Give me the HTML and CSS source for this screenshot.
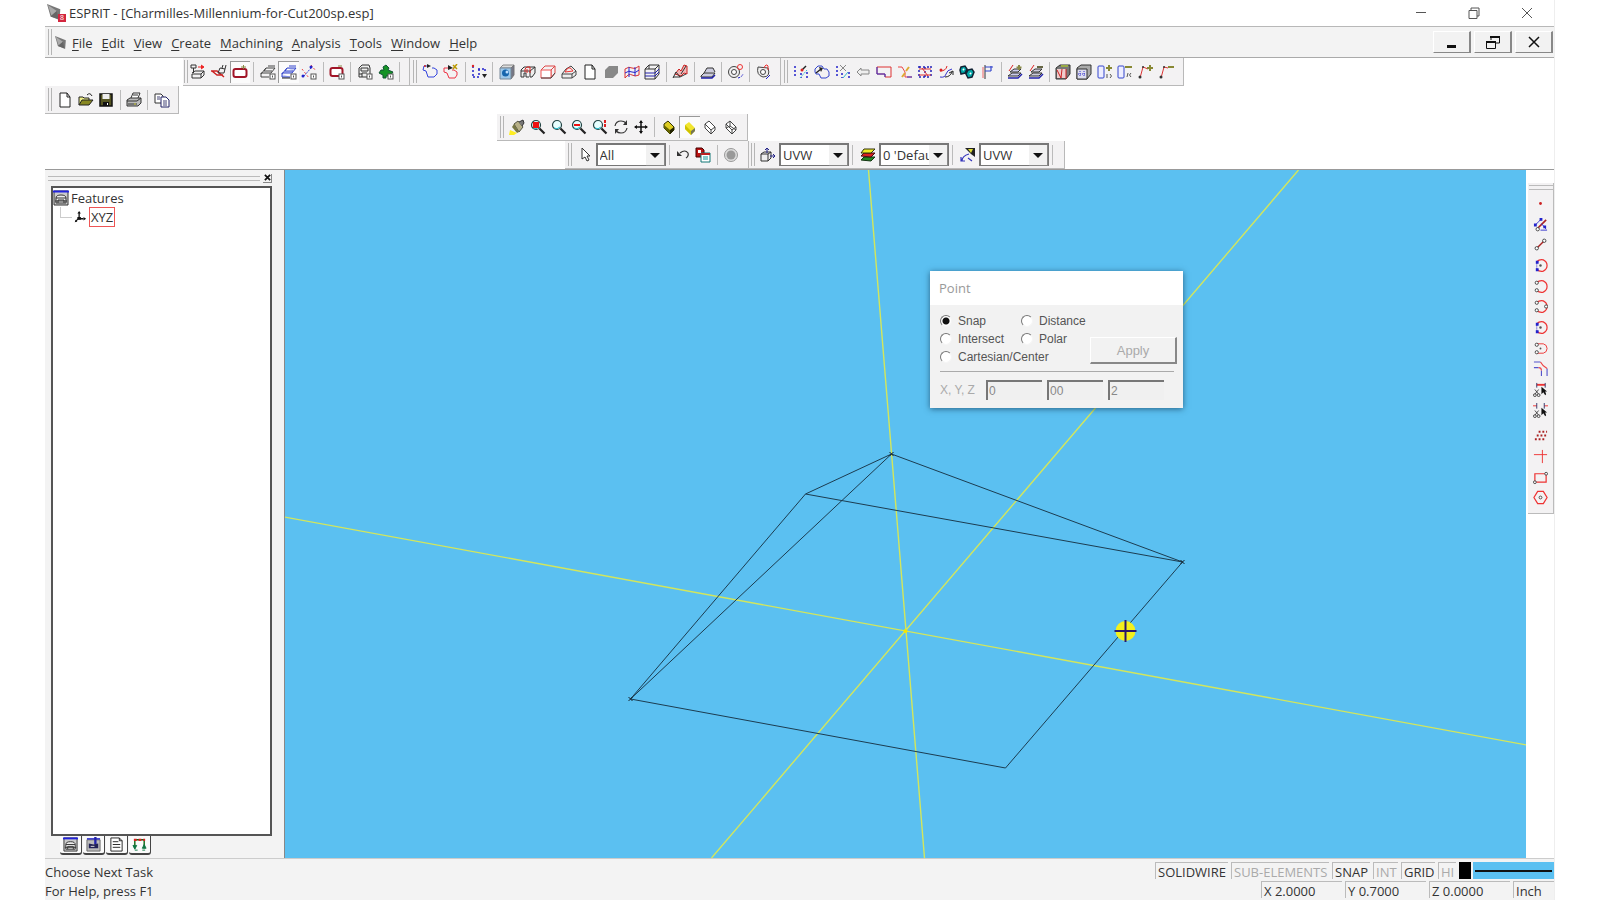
FILE: index.html
```html
<!DOCTYPE html>
<html lang="en">
<head>
<meta charset="utf-8">
<title>ESPRIT</title>
<link rel="stylesheet" href="styles.css">
</head>
<body>
<svg class="sprite" aria-hidden="true">
  <symbol id="logo" viewBox="0 0 18 18"><path d="M0 0L15 6L14 18L4 14Z" fill="#777"/><path d="M1 1L11 8L5 13Z" fill="#aaa"/><path d="M4 14L11 8L13 17Z" fill="#666"/></symbol>
  <symbol id="gear" viewBox="0 0 16 16"><rect x="10" y="10" width="5" height="5" fill="#fff" stroke="#555"/><path d="M12.500 11.500v2" stroke="#555"/></symbol>
  <symbol id="m1" viewBox="0 0 16 16"><g fill="none" stroke="#333"><path d="M1 1h5v3h-5zM3.500 4v5M2 9l3-2h9l-3 3h-9v4h9l3-3v-4M11 10v4"/></g><path d="M8 3h5M11 1l3 2l-3 2" stroke="#e22" fill="#e22"/></symbol>
  <symbol id="m2" viewBox="0 0 16 16"><path d="M0 7h6l7 6M1 7l5 4h6" stroke="#c22" stroke-width="1.500" fill="none"/><path d="M7 9l2-5l5 1l-1 4zM11 4l1-3M14 5l1-4" fill="none" stroke="#333"/></symbol>
  <symbol id="m3" viewBox="0 0 16 16"><rect x="1.500" y="5" width="13" height="8" rx="2" fill="#fff" stroke="#a11527" stroke-width="2"/><path d="M9 3h5M11.500 1v4" stroke="#884"/></symbol>
  <symbol id="m4" viewBox="0 0 16 16"><path d="M1 10l5-6h9l-4 5h-10v4h8M6 4l-2 3h8M8 2h7" fill="none" stroke="#444"/><use href="#gear"/></symbol>
  <symbol id="m5" viewBox="0 0 16 16"><path d="M1 10l5-6h9l-4 5h-10v4h8M6 4l-2 3h8M8 2h7" fill="#c9cff5" stroke="#34c"/><path d="M1 14h8" stroke="#222"/><use href="#gear"/></symbol>
  <symbol id="m6" viewBox="0 0 16 16"><path d="M3 12L10 4" stroke="#34c" stroke-dasharray="2 1"/><path d="M1 5l7 9M10 1l5 6" stroke="#e44" stroke-dasharray="2 2"/><circle cx="10" cy="3" r="1.500" fill="#22c"/><circle cx="2" cy="12" r="1.500" fill="#22c"/><use href="#gear"/></symbol>
  <symbol id="m7" viewBox="0 0 16 16"><rect x="1.500" y="4" width="12" height="8" rx="2" fill="#fff" stroke="#a11527" stroke-width="2"/><path d="M9 2h4" stroke="#884"/><use href="#gear"/></symbol>
  <symbol id="m8" viewBox="0 0 16 16"><path d="M2 13v-9l3-3h7l1 3v9zM4 4h7v3h-7zM2 10h3" fill="#eee" stroke="#333"/><path d="M5 13v-4h5" stroke="#333" fill="none"/><use href="#gear"/></symbol>
  <symbol id="m9" viewBox="0 0 16 16"><path d="M8 1l3 3l-1 2l5 2l-3 4h-4v2h-3v-3l-4-2l2-3h3l-1-3z" fill="#159326" stroke="#153"/><use href="#gear"/></symbol>
  <symbol id="c1" viewBox="0 0 16 16"><path d="M5 2h-3l-1 4l3 1l2 6h6l3-3v-4l-3-2h-2" fill="none" stroke="#34d"/><path d="M5 0l4 2l-4 2z" fill="#222"/><circle cx="3" cy="2" r="1" fill="#c22"/></symbol>
  <symbol id="c2" viewBox="0 0 16 16"><path d="M5 4h-4v4l3 1l2 5h6l2-3v-3l-3-2h-2" fill="none" stroke="#e34"/><path d="M5 1l5 3l-5 2z" fill="#222"/><path d="M10 1l4 4M14 0l-4 5" stroke="#b90" stroke-width="1.500"/></symbol>
  <symbol id="c3" viewBox="0 0 16 16"><path d="M2 2v12M2 13h8M7 5h7M8 5v8M14 5v3" fill="none" stroke="#22c" stroke-width="1.500" stroke-dasharray="2 2"/><path d="M11 10h5l-2.500 4z" fill="#222"/><circle cx="2" cy="2" r="1.200" fill="#d22"/></symbol>
  <symbol id="s1" viewBox="0 0 16 16"><path d="M1 4l3-3h11l-3 3z" fill="#ddd" stroke="#888"/><path d="M12 4l3-3v10l-3 4z" fill="#778" stroke="#777"/><path d="M1 4h11v11h-11z" fill="#9cc8ea" stroke="#789"/><circle cx="6.500" cy="9" r="3.500" fill="#1565ad"/><circle cx="8" cy="8" r="1.500" fill="#bdf"/></symbol>
  <symbol id="s2" viewBox="0 0 16 16"><path d="M1 6l3-3h11v6l-3 4h-2v-6h-9M1 6v7h3v-4h2v4h3M10 7l5-4" fill="#eee" stroke="#333"/><path d="M5 8v-3l2-2h3v6M7 9v-4" fill="none" stroke="#d22"/></symbol>
  <symbol id="s3" viewBox="0 0 16 16"><path d="M1 6l4-4h10l-4 4v8M15 2v7l-4 5" fill="none" stroke="#d44"/><path d="M1 6h10v8h-10z" fill="#fff" stroke="#e55"/><path d="M1 14h10l4-5" fill="none" stroke="#444"/></symbol>
  <symbol id="s4" viewBox="0 0 16 16"><path d="M1 10l4-5l5-3l5 5v4l-4 3h-10zM1 10h10l4-3M11 10v4" fill="#eee" stroke="#444"/><path d="M4 8q4-8 8-1z" fill="none" stroke="#e33"/></symbol>
  <symbol id="doc" viewBox="0 0 16 16"><path d="M3 1h7l3 4v10h-10zM10 1v4h3" fill="#fff" stroke="#222"/></symbol>
  <symbol id="s6" viewBox="0 0 16 16"><path d="M2 6l4-4h9v7l-5 5h-8z" fill="#888"/></symbol>
  <symbol id="s7" viewBox="0 0 16 16"><path d="M1 5q4-3 7-1t7-2v9q-4 2-7 0t-7 3z" fill="none" stroke="#d33"/><path d="M5 3v10M11 3v9M1 9q4-3 7-1t7-2" fill="none" stroke="#22c"/></symbol>
  <symbol id="s8" viewBox="0 0 16 16"><path d="M1 5l4-4h10v9l-4 5h-10zM1 5h10v10M11 5l4-4M5 1v4" fill="none" stroke="#333"/><path d="M1 9h10l4-4M1 12h10l4-4" stroke="#22a" fill="none"/></symbol>
  <symbol id="s9" viewBox="0 0 16 16"><path d="M3 10l4-5l2 2l3-6l3 1v8l-3-1l-3 3z" fill="#f2b7b7" stroke="#c22"/><path d="M1 14l3-6l4 5h-7M9 10l5-8M8 13l6-3" stroke="#333" fill="none"/></symbol>
  <symbol id="s10" viewBox="0 0 16 16"><path d="M1 12l3-3h11l-3 4h-11zM4 9l3-5h6l2 4" fill="#ccd" stroke="#333"/><path d="M1 14h11l3-3" fill="none" stroke="#22a" stroke-width="1.500"/></symbol>
  <symbol id="s11" viewBox="0 0 16 16"><circle cx="6" cy="8" r="5.500" fill="#eee" stroke="#444"/><circle cx="6" cy="8" r="2.500" fill="#fff" stroke="#444"/><circle cx="12" cy="3" r="2.500" fill="none" stroke="#e33"/><path d="M10 14q4-1 5-4" fill="none" stroke="#22c" stroke-dasharray="2 1"/></symbol>
  <symbol id="s12" viewBox="0 0 16 16"><path d="M2 3l10 1q3 9-5 9q-7-2-5-10z" fill="#eee" stroke="#444"/><circle cx="7" cy="8" r="2.500" fill="#fff" stroke="#444"/><path d="M8 4q2-5 4-2v4" fill="none" stroke="#e33"/><path d="M10 15l4-4" stroke="#22c"/></symbol>
  <symbol id="f1" viewBox="0 0 16 16"><path d="M2 2v12M14 8v6M8 9v5" stroke="#22c" stroke-width="1.500" stroke-dasharray="2 2"/><path d="M9 6l4-4" stroke="#222" stroke-width="1.500"/><path d="M7 14l7-8" stroke="#3bc" stroke-dasharray="2 1"/><circle cx="9" cy="6" r="1.500" fill="#d22"/></symbol>
  <symbol id="f2" viewBox="0 0 16 16"><path d="M1 5l3-3h4l2 3h3l2 3v4l-3 2h-5l-2-4h-3l-1-2z" fill="none" stroke="#34c"/><path d="M2 9l5-4" stroke="#222" stroke-width="1.500"/><path d="M5 3l4 1l-2 4z" fill="#222"/></symbol>
  <symbol id="f3" viewBox="0 0 16 16"><path d="M2 2v12M14 8v6M7 9v5" stroke="#22c" stroke-width="1.500" stroke-dasharray="2 2"/><path d="M5 1l6 6M11 1l-6 6" stroke="#888"/><path d="M8 14l5-6" stroke="#3bc"/></symbol>
  <symbol id="f4" viewBox="0 0 16 16"><path d="M2 8l4-4v2h8v4h-8v2z" fill="#eee" stroke="#888"/></symbol>
  <symbol id="f5" viewBox="0 0 16 16"><path d="M1 3h14v10h-6v-3h-8z" fill="none" stroke="#d33"/><path d="M1 3v7h8v3" fill="none" stroke="#33c"/></symbol>
  <symbol id="f6" viewBox="0 0 16 16"><path d="M1 3h4l3 5v5h7" fill="none" stroke="#e44"/><path d="M9 7l3-4M5 13l3-4" stroke="#da3" stroke-width="2"/><path d="M10 13h5" stroke="#33c"/></symbol>
  <symbol id="f7" viewBox="0 0 16 16"><path d="M2 2v12M14 2v12M2 3h12M2 13h12M8 3v10" fill="none" stroke="#22b" stroke-width="1.500" stroke-dasharray="2 2"/><path d="M2 5h12M2 11h12M5 4l6 8" stroke="#d33"/></symbol>
  <symbol id="f8" viewBox="0 0 16 16"><path d="M2 7q6 0 7-5" stroke="#d22" fill="none"/><circle cx="3" cy="6" r="1.500" fill="#d22"/><path d="M2 13q5 1 6-3t6-5" fill="none" stroke="#33c"/><path d="M7 13q5 0 7-5M11 9l4-2v4" fill="none" stroke="#222"/></symbol>
  <symbol id="f9" viewBox="0 0 16 16"><path d="M2 3l4-1l2 3l-2 4l-4 1l-1-4zM9 6l4-1l2 3l-2 5l-4 1l-2-4z" fill="#0aa" stroke="#123" stroke-width="1.500"/><path d="M4 5l1 1M11 9l1 1" stroke="#fff" stroke-width="2"/></symbol>
  <symbol id="f10" viewBox="0 0 16 16"><path d="M6 1v14" stroke="#333"/><path d="M6 7h6M12 2v5M6 3h8" stroke="#34c" stroke-width="1.200"/><path d="M4 3v11" stroke="#e66"/></symbol>
  <symbol id="f11" viewBox="0 0 16 16"><path d="M1 12l4-3h9l-3 3zM3 8l4-3h7l-3 3z" fill="#cce" stroke="#333"/><path d="M1 14h10l4-4" stroke="#22a" fill="none" stroke-width="1.500"/><path d="M2 7l4-6" stroke="#d22"/><path d="M12 1v5M9.500 3.500h5" stroke="#884" stroke-width="2"/></symbol>
  <symbol id="f12" viewBox="0 0 16 16"><path d="M1 12l4-3h9l-3 3zM3 8l4-3h7l-3 3z" fill="#ccd" stroke="#333"/><path d="M1 14h10l4-4" stroke="#22a" fill="none" stroke-width="1.500"/><path d="M2 7l4-6" stroke="#d22"/><path d="M9 3h6" stroke="#664" stroke-width="2"/></symbol>
  <symbol id="f13" viewBox="0 0 16 16"><path d="M1 4l4-3h10v9l-4 5h-10z" fill="#777" stroke="#333"/><path d="M2 5h9v9h-9z" fill="#ecc"/><path d="M2 6l4 8M7 5l-1 9M11 5v10" stroke="#c22"/><path d="M6 2h7" stroke="#9a4" stroke-width="2"/></symbol>
  <symbol id="f14" viewBox="0 0 16 16"><path d="M1 4l4-3h10v9l-4 5h-10z" fill="#aaa" stroke="#333"/><path d="M1 5h10v10h-10z" fill="#dde" stroke="#333"/><path d="M4 7v6M8 7v6M2 10h8" stroke="#33c" stroke-dasharray="1 1"/></symbol>
  <symbol id="f15" viewBox="0 0 16 16"><rect x="1" y="2" width="6" height="12" rx="1" fill="#eef" stroke="#34c"/><path d="M12 1v6M9 4h6" stroke="#883" stroke-width="2"/><path d="M10 14v-4M13 10q3 2 0 4" fill="none" stroke="#555"/></symbol>
  <symbol id="f16" viewBox="0 0 16 16"><rect x="1" y="2" width="6" height="12" rx="1" fill="#eef" stroke="#34c"/><path d="M8 3h7" stroke="#883" stroke-width="2"/><path d="M10 13l1-4M14 9q-3 2 0 4" fill="none" stroke="#555"/></symbol>
  <symbol id="f17" viewBox="0 0 16 16"><path d="M2 14l3-11l5 2" fill="none" stroke="#d33"/><path d="M12 1v6M9 4h6" stroke="#883" stroke-width="2"/><circle cx="2" cy="13" r="1.500" fill="#333"/><circle cx="5" cy="3" r="1" fill="#333"/></symbol>
  <symbol id="f18" viewBox="0 0 16 16"><path d="M2 14l3-11l4 1" fill="none" stroke="#d33"/><path d="M9 3h6" stroke="#883" stroke-width="2"/><circle cx="2" cy="13" r="1.500" fill="#333"/><circle cx="5" cy="3" r="1" fill="#333"/></symbol>
  <symbol id="open" viewBox="0 0 16 16"><path d="M1 13v-8h4l1 1h5v2" fill="#ee8" stroke="#222"/><path d="M1 13l3-5h11l-4 5z" fill="#882" stroke="#222"/><path d="M9 3q3-3 5 1" fill="none" stroke="#222"/></symbol>
  <symbol id="save" viewBox="0 0 16 16"><path d="M2 2h12v12h-12z" fill="#552" stroke="#111" stroke-width="1.500"/><path d="M4.500 2h7v5h-7z" fill="#eee"/><path d="M5 10h6v4h-6z" fill="#111"/><path d="M9 11h1v2h-1z" fill="#fff"/></symbol>
  <symbol id="print" viewBox="0 0 16 16"><path d="M5 6l2-5h7l-2 5" fill="#fff" stroke="#333"/><path d="M1 8l3-2h11v5l-3 3h-11z" fill="#bbb" stroke="#333"/><path d="M1 9h10l4-3M2 12h9M7 3h5" stroke="#333" fill="none"/><path d="M8 12h2" stroke="#cc3"/></symbol>
  <symbol id="copy" viewBox="0 0 16 16"><path d="M1 2h6l2 2v7h-8z" fill="#fff" stroke="#333"/><path d="M7 5h5l3 3v7h-8z" fill="#fff" stroke="#226"/><path d="M3 5h3M3 7h3M9 9h4M9 11h4M9 13h4" stroke="#447"/></symbol>
  <symbol id="brush" viewBox="0 0 16 16"><path d="M5 5l4-3l5 6l-4 5z" fill="#b8b188" stroke="#554"/><path d="M10 3l4-2l1 3l-2 3" fill="#777" stroke="#333"/><path d="M5 5l5 8l-2 1l-5-6z" fill="#774"/><path d="M1 11l7 3l-3 2h-5z" fill="#fe2"/></symbol>
  <symbol id="lens" viewBox="0 0 16 16"><circle cx="6" cy="6" r="4.500" fill="#e7ffff" stroke="#244" stroke-width="1.200"/><path d="M9.500 9.500l5 5" stroke="#222" stroke-width="2.200"/><path d="M3 9q3 2 6-1" stroke="#2bc" fill="none"/></symbol>
  <symbol id="z1" viewBox="0 0 16 16"><use href="#lens"/><path d="M3 3h6v6h-6z" fill="#e11"/></symbol>
  <symbol id="z3" viewBox="0 0 16 16"><use href="#lens"/><path d="M3 6h6" stroke="#e11" stroke-width="2"/></symbol>
  <symbol id="z4" viewBox="0 0 16 16"><use href="#lens"/><path d="M13 1v7" stroke="#d22" stroke-width="2" stroke-dasharray="3 1"/></symbol>
  <symbol id="rot" viewBox="0 0 16 16"><path d="M2 7q1-5 6-5q3 0 5 2M14 9q-1 5-6 5q-3 0-5-2" fill="none" stroke="#333" stroke-width="1.200"/><path d="M14 1v5h-4zM2 15v-5h4z" fill="#333"/></symbol>
  <symbol id="pan" viewBox="0 0 16 16"><path d="M8 2v12M2 8h12" stroke="#111" stroke-width="1.500"/><path d="M8 1l2 3h-4zM8 15l2-3h-4zM1 8l3-2v4zM15 8l-3-2v4z" fill="#111"/></symbol>
  <symbol id="b1" viewBox="0 0 16 16"><path d="M3 5l4-3l6 6v3l-4 4l-6-6z" fill="#dc2" stroke="#330"/><path d="M3 6l6 5v4l-6-6z" fill="#660"/><path d="M9 11l4-3v3l-4 4z" fill="#220"/></symbol>
  <symbol id="b2" viewBox="0 0 16 16"><path d="M3 5l4-3l6 6v3l-4 4l-6-6z" fill="#f1e52e"/><path d="M3 5l6 6v4l-6-6z" fill="#cfc200"/><path d="M9 11l4-3v3l-4 4z" fill="#775"/></symbol>
  <symbol id="b3" viewBox="0 0 16 16"><path d="M3 5l4-3l6 6v3l-4 4l-6-6zM3 5l6 6v4M9 11l4-3" fill="#fff" stroke="#444"/></symbol>
  <symbol id="b4" viewBox="0 0 16 16"><path d="M3 5l4-3l6 6v3l-4 4l-6-6zM3 5l6 6v4M9 11l4-3M7 2v5l-4 2M7 7l6 4" fill="#fff" stroke="#444"/></symbol>
  <symbol id="arrow" viewBox="0 0 16 16"><path d="M5 1v11l3-2l2 4l2-1l-2-4h3z" fill="#fff" stroke="#333"/></symbol>
  <symbol id="undo" viewBox="0 0 16 16"><path d="M5 6q5-4 8 0q1 3-2 5" fill="none" stroke="#333" stroke-width="1.200"/><path d="M2 4v5h5z" fill="#333"/></symbol>
  <symbol id="paste" viewBox="0 0 16 16"><path d="M1 1h6l2 2v7h-8z" fill="#b11" stroke="#400"/><path d="M3 3h3v3h-3z" fill="#fff"/><path d="M6 6h9v9h-9z" fill="#fff" stroke="#177"/><path d="M6 7h9" stroke="#b22" stroke-width="2"/><path d="M8 10h5M8 12h5" stroke="#199"/></symbol>
  <symbol id="stop" viewBox="0 0 16 16"><circle cx="8" cy="8" r="6.500" fill="#ddd" stroke="#999"/><circle cx="8" cy="8" r="4.500" fill="#999"/></symbol>
  <symbol id="plane" viewBox="0 0 16 16"><path d="M1 7l3-2h7v6l-3 3h-7zM1 7h7v7M8 7l3-2" fill="#eee" stroke="#333"/><path d="M7 6v-5M5 3l2-2l2 2M10 9h5M13 7l2 2l-2 2" stroke="#228" fill="none"/></symbol>
  <symbol id="layers" viewBox="0 0 16 16"><path d="M1 13l3-3h11l-4 4z" fill="#282" stroke="#131"/><path d="M1 9l3-3h11l-4 4z" fill="#d22" stroke="#411"/><path d="M1 6l3-4h11l-4 4z" fill="#ee2" stroke="#331"/></symbol>
  <symbol id="work" viewBox="0 0 16 16"><path d="M5 1h10v9l-4-3z" fill="#222"/><path d="M8 2h5l-2 4z" fill="#dd3"/><path d="M2 14q0-5 7-7M1 10v4h4M8 11l4 3" fill="none" stroke="#33b" stroke-width="1.200"/></symbol>
  <symbol id="tree" viewBox="0 0 16 16"><path d="M1 1h14v14h-14z" fill="#ccc" stroke="#333"/><path d="M0 1.500h16" stroke="#22d" stroke-width="2"/><path d="M3 8q0-3 5-3t5 3v5h-10zM3 8h10M2 11h12M5 13v-3h6v3" fill="#eee" stroke="#333"/></symbol>
  <symbol id="axis" viewBox="0 0 16 16"><path d="M7 3v7h5M7 9l-4 4" stroke="#111" stroke-width="1.500" fill="none"/><path d="M7 1l2 3h-4zM15 10l-3-2v4zM2 14l1-3l2 2zM5 8h4v3h-4z" fill="#111"/></symbol>
  <symbol id="ops" viewBox="0 0 16 16"><path d="M1 3h14v12h-14z" fill="#bbb" stroke="#666"/><path d="M1 2h14" stroke="#22c" stroke-width="1.500"/><path d="M10 0v8" stroke="#22a" stroke-width="2.500"/><path d="M3 7l5 1l5-1v5h-10z" fill="#225"/><path d="M5 10h4" stroke="#ddd"/></symbol>
  <symbol id="note" viewBox="0 0 16 16"><path d="M2 1h9l3 3v11h-12zM11 1v3h3M4 5h6M4 8h8M4 11h8" fill="#fff" stroke="#222"/></symbol>
  <symbol id="loop" viewBox="0 0 16 16"><path d="M3 12v-9h10v9" fill="none" stroke="#161" stroke-width="1.500"/><path d="M2 3h12" stroke="#d22" stroke-width="2.500" stroke-dasharray="3 2"/><path d="M1 9h4l-2 4zM11 12l2-4l2 4zM3 14h3M11 14h3" fill="#174" stroke="#174"/></symbol>
  <symbol id="p1" viewBox="0 0 16 16"><circle cx="8" cy="8" r="1.500" fill="#c22"/></symbol>
  <symbol id="p2" viewBox="0 0 16 16"><path d="M5 12L14 3" stroke="#a22" stroke-width="1.800"/><path d="M2 9L9 2M8 14h7M9 7l5 6" stroke="#33c"/><circle cx="5" cy="13" r="1.800" fill="#fff" stroke="#444"/><path d="M1 7h3v3h-3zM7 1h3v3h-3zM11 9h3v3h-3z" fill="#22c"/></symbol>
  <symbol id="p3" viewBox="0 0 16 16"><path d="M4 12L12 4" stroke="#a22" stroke-width="1.500"/><circle cx="4" cy="12" r="1.800" fill="#fff" stroke="#444"/><circle cx="12" cy="4" r="1.800" fill="#fff" stroke="#444"/></symbol>
  <symbol id="arc" viewBox="0 0 16 16"><path d="M4 4q3-3 7-2q4 2 4 6t-4 6q-4 1-7-2" fill="none" stroke="#e33" stroke-width="1.300"/></symbol>
  <symbol id="p4" viewBox="0 0 16 16"><use href="#arc"/><path d="M3 3h3v3h-3zM3 11h3v3h-3z" fill="#22c"/><path d="M4 5v7" stroke="#22c" stroke-dasharray="1 1"/><circle cx="8" cy="8" r="1.300" fill="#555"/></symbol>
  <symbol id="p5" viewBox="0 0 16 16"><use href="#arc"/><circle cx="4" cy="4" r="1.700" fill="#fff" stroke="#444"/><circle cx="4" cy="12" r="1.700" fill="#fff" stroke="#444"/></symbol>
  <symbol id="p6" viewBox="0 0 16 16"><use href="#p5"/><circle cx="14" cy="8" r="1.700" fill="#fff" stroke="#444"/></symbol>
  <symbol id="p8" viewBox="0 0 16 16"><path d="M4 3h7q4 1 4 5t-4 5h-7" fill="none" stroke="#e33"/><circle cx="4" cy="4" r="1.700" fill="#fff" stroke="#444"/><circle cx="4" cy="12" r="1.700" fill="#fff" stroke="#444"/><circle cx="8" cy="8" r="1" fill="#555"/></symbol>
  <symbol id="p9" viewBox="0 0 16 16"><path d="M1 1h7M15 8v8M1 7h5M9 10v6" fill="none" stroke="#55c" stroke-width="1.200"/><path d="M8 1q2 4 7 7M6 7q3 0 3 3" stroke="#e44" fill="none" stroke-width="1.200"/></symbol>
  <symbol id="cut" viewBox="0 0 16 16"><path d="M2 8l4 5M6 8l-4 5" stroke="#444"/><circle cx="2" cy="14" r="1.500" fill="none" stroke="#444"/><circle cx="6" cy="14" r="1.500" fill="none" stroke="#444"/><path d="M9 5v8l2-2l2 3l1-1l-1-3h2z" fill="#111"/></symbol>
  <symbol id="p10" viewBox="0 0 16 16"><path d="M4 3h9" stroke="#e33" stroke-width="2"/><path d="M4 1v5M13 1v5" stroke="#336"/><use href="#cut"/></symbol>
  <symbol id="p11" viewBox="0 0 16 16"><path d="M0 3h4M12 3h4" stroke="#e33"/><path d="M4 0v6M12 0v6" stroke="#336"/><use href="#cut"/></symbol>
  <symbol id="p12" viewBox="0 0 16 16"><path d="M6 4h9M4 8h10M2 12h10" stroke="#a22" stroke-width="2" stroke-dasharray="2 2"/></symbol>
  <symbol id="p13" viewBox="0 0 16 16"><path d="M1 6h14M10 1v14" stroke="#e33"/></symbol>
  <symbol id="p14" viewBox="0 0 16 16"><path d="M2 4h12v9h-12z" fill="none" stroke="#e33" stroke-width="1.300"/><circle cx="2" cy="13" r="1.500" fill="#fff" stroke="#444"/><circle cx="14" cy="4" r="1.500" fill="#fff" stroke="#444"/></symbol>
  <symbol id="p15" viewBox="0 0 16 16"><path d="M5 1.500h6l4 6.500l-4 6.500h-6l-4-6.500z" fill="none" stroke="#e33" stroke-width="1.300"/><circle cx="8" cy="8" r="1.500" fill="#fff" stroke="#444"/></symbol>
</svg>

<div class="app">
  <header class="titlebar">
    <span class="brand"><svg class="brand-mark"><use href="#logo"/></svg><span class="brand-badge">8</span></span>
    <h1>ESPRIT - [Charmilles-Millennium-for-Cut200sp.esp]</h1>
    <div class="window-buttons">
      <button aria-label="Minimize"><svg viewBox="0 0 12 12"><path d="M1 5.500h10"/></svg></button>
      <button aria-label="Restore"><svg viewBox="0 0 12 12"><path d="M1 3.500h8v8h-8zM3 3v-2h8v8h-2"/></svg></button>
      <button aria-label="Close"><svg viewBox="0 0 12 12"><path d="M1 1l10 10M11 1l-10 10"/></svg></button>
    </div>
  </header>

  <nav class="menubar">
    <span class="grip"></span>
    <svg class="doc-mark"><use href="#logo"/></svg>
    <button><u>F</u>ile</button><button><u>E</u>dit</button><button><u>V</u>iew</button><button><u>C</u>reate</button><button><u>M</u>achining</button><button><u>A</u>nalysis</button><button><u>T</u>ools</button><button><u>W</u>indow</button><button><u>H</u>elp</button>
    <div class="doc-buttons">
      <button aria-label="Minimize document"><svg viewBox="0 0 14 14"><path d="M2 11.500h9" stroke-width="3"/></svg></button>
      <button aria-label="Restore document"><svg viewBox="0 0 14 14"><path d="M5 1v4M4 2h10M13.500 1v7h-4M.5 6v7.500h9v-7.500" fill="none"/><path d="M4 2h10M0 7h10" stroke-width="2"/></svg></button>
      <button aria-label="Close document"><svg viewBox="0 0 14 14"><path d="M2 2l10 10M12 2l-10 10" stroke-width="1.500"/></svg></button>
    </div>
  </nav>

  <div class="bars">
    <div class="bar-row row-create">
      <div class="toolbar machining"><span class="grip"></span>
        <button aria-label="Simulation"><svg><use href="#m1"/></svg></button><button aria-label="Tool"><svg><use href="#m2"/></svg></button><button class="on" aria-label="Stock"><svg><use href="#m3"/></svg></button><i></i>
        <button aria-label="Mill"><svg><use href="#m4"/></svg></button><button class="on" aria-label="Wire"><svg><use href="#m5"/></svg></button><button aria-label="Path"><svg><use href="#m6"/></svg></button><i></i>
        <button aria-label="Contour"><svg><use href="#m7"/></svg></button><i></i>
        <button aria-label="Part"><svg><use href="#m8"/></svg></button><button aria-label="Machine"><svg><use href="#m9"/></svg></button><i></i>
      </div>
      <div class="toolbar features"><span class="grip"></span>
        <button aria-label="Chain"><svg><use href="#c1"/></svg></button><button aria-label="Auto chain"><svg><use href="#c2"/></svg></button><i></i>
        <button aria-label="Points"><svg><use href="#c3"/></svg></button><i></i>
        <button aria-label="Solid"><svg><use href="#s1"/></svg></button><button aria-label="Hole"><svg><use href="#s2"/></svg></button><button aria-label="Box"><svg><use href="#s3"/></svg></button><button aria-label="Pocket"><svg><use href="#s4"/></svg></button><button aria-label="Page"><svg><use href="#doc"/></svg></button><button aria-label="Face"><svg><use href="#s6"/></svg></button><button aria-label="Surface"><svg><use href="#s7"/></svg></button><button aria-label="Slices"><svg><use href="#s8"/></svg></button><i></i>
        <button aria-label="Draft"><svg><use href="#s9"/></svg></button><i></i>
        <button aria-label="Stacked"><svg><use href="#s10"/></svg></button><i></i>
        <button aria-label="Gear"><svg><use href="#s11"/></svg></button><i></i>
        <button aria-label="Cam"><svg><use href="#s12"/></svg></button>
      </div>
      <div class="toolbar edit"><span class="grip"></span>
        <button aria-label="Edit points"><svg><use href="#f1"/></svg></button><button aria-label="Reverse"><svg><use href="#f2"/></svg></button><button aria-label="Remove"><svg><use href="#f3"/></svg></button><button aria-label="Back"><svg><use href="#f4"/></svg></button><button aria-label="Region"><svg><use href="#f5"/></svg></button><button aria-label="Trim"><svg><use href="#f6"/></svg></button><button aria-label="Grid"><svg><use href="#f7"/></svg></button><button aria-label="Curve"><svg><use href="#f8"/></svg></button><button aria-label="Link"><svg><use href="#f9"/></svg></button><button aria-label="Offset"><svg><use href="#f10"/></svg></button><i></i>
        <button aria-label="Add level"><svg><use href="#f11"/></svg></button><button aria-label="Remove level"><svg><use href="#f12"/></svg></button><i></i>
        <button aria-label="Taper"><svg><use href="#f13"/></svg></button><button aria-label="Mesh"><svg><use href="#f14"/></svg></button><button aria-label="Add code"><svg><use href="#f15"/></svg></button><button aria-label="Remove code"><svg><use href="#f16"/></svg></button><button aria-label="Add node"><svg><use href="#f17"/></svg></button><button aria-label="Remove node"><svg><use href="#f18"/></svg></button>
      </div>
    </div>
    <div class="bar-row">
      <div class="toolbar standard"><span class="grip"></span>
        <button aria-label="New"><svg><use href="#doc"/></svg></button><button aria-label="Open"><svg><use href="#open"/></svg></button><button aria-label="Save"><svg><use href="#save"/></svg></button><i></i>
        <button aria-label="Print"><svg><use href="#print"/></svg></button><i></i><button aria-label="Copy"><svg><use href="#copy"/></svg></button>
      </div>
    </div>
    <div class="bar-row row-view">
      <div class="toolbar view"><span class="grip"></span>
        <button aria-label="Redraw"><svg><use href="#brush"/></svg></button><button aria-label="Fit"><svg><use href="#z1"/></svg></button><button aria-label="Zoom"><svg><use href="#lens"/></svg></button><button aria-label="Zoom out"><svg><use href="#z3"/></svg></button><button aria-label="Zoom previous"><svg><use href="#z4"/></svg></button><button aria-label="Rotate"><svg><use href="#rot"/></svg></button><button aria-label="Pan"><svg><use href="#pan"/></svg></button><i></i>
        <button aria-label="Shaded with edges"><svg><use href="#b1"/></svg></button><button class="on" aria-label="Shaded"><svg><use href="#b2"/></svg></button><button aria-label="Hidden line"><svg><use href="#b3"/></svg></button><button aria-label="Wireframe"><svg><use href="#b4"/></svg></button>
      </div>
    </div>
    <div class="bar-row row-select">
      <div class="toolbar select"><span class="grip"></span>
        <button aria-label="Select"><svg><use href="#arrow"/></svg></button>
        <span class="combo"><select aria-label="Selection filter"><option>All</option></select></span><i></i>
        <button aria-label="Undo"><svg><use href="#undo"/></svg></button><button aria-label="Group"><svg><use href="#paste"/></svg></button><i></i><button aria-label="Stop"><svg><use href="#stop"/></svg></button>
      </div>
      <div class="toolbar planes"><span class="grip"></span>
        <button aria-label="Plane"><svg><use href="#plane"/></svg></button>
        <span class="combo"><select aria-label="Active plane"><option>UVW</option></select></span><i></i>
        <button aria-label="Layers"><svg><use href="#layers"/></svg></button>
        <span class="combo"><select aria-label="Layer"><option>0 'Default'</option></select></span><i></i>
        <button aria-label="Work coordinates"><svg><use href="#work"/></svg></button>
        <span class="combo"><select aria-label="Work plane"><option>UVW</option></select></span><i></i>
      </div>
    </div>
  </div>

  <main class="workspace">
    <aside class="project">
      <div class="project-head"><span class="rule"></span><button aria-label="Close panel"><svg viewBox="0 0 8 8"><path d="M1 1l6 6M7 1l-6 6"/></svg></button></div>
      <div class="tree">
        <div class="tree-root"><svg><use href="#tree"/></svg>Features</div>
        <div class="tree-child"><span class="branch"></span><svg><use href="#axis"/></svg><span class="picked">XYZ</span></div>
      </div>
      <div class="tabs">
        <button aria-label="Features"><svg><use href="#tree"/></svg></button><button aria-label="Operations"><svg><use href="#ops"/></svg></button><button aria-label="Notes"><svg><use href="#note"/></svg></button><button aria-label="Loops"><svg><use href="#loop"/></svg></button>
      </div>
    </aside>

    <section class="canvas">
      <svg class="scene" viewBox="284 170 1242 688" preserveAspectRatio="xMidYMid slice">
        <g stroke="#d3e65c" stroke-width="1.400"><path d="M868 170L924 858M1298 170L711 858M284 517L1526 745"/></g>
        <circle cx="905" cy="631" r="2" fill="#f5e500"/>
        <path d="M891 454L805 494L1182 562L891 454L630 699L805 494M1182 562L1005 768L630 699" fill="none" stroke="#1c3c50"/>
        <path d="M889 452l4 4M893 452l-4 4M1180 560l4 4M1184 560l-4 4M628 697l4 4M632 697l-4 4" stroke="#15242e"/>
        <circle cx="1125" cy="631" r="10" fill="#f3f01c"/>
        <path d="M1125 620v22M1114 631h22" stroke="#2b1a6b" stroke-width="2"/>
      </svg>
      <form class="dialog">
        <h2>Point</h2>
        <div class="dialog-body">
          <div class="choices">
            <label><input type="radio" name="mode" checked>Snap</label>
            <label><input type="radio" name="mode">Distance</label>
            <label><input type="radio" name="mode">Intersect</label>
            <label><input type="radio" name="mode">Polar</label>
            <label><input type="radio" name="mode">Cartesian/Center</label>
          </div>
          <button class="apply" type="button" disabled>Apply</button>
          <div class="coords"><span>X, Y, Z</span><input aria-label="X" value="0" disabled><input aria-label="Y" value="00" disabled><input aria-label="Z" value="2" disabled></div>
        </div>
      </form>
    </section>

    <aside class="rail">
      <div class="geometry"><span class="rule"></span>
        <button aria-label="Point"><svg><use href="#p1"/></svg></button><button aria-label="Line set"><svg><use href="#p2"/></svg></button><button aria-label="Segment"><svg><use href="#p3"/></svg></button><button aria-label="Arc"><svg><use href="#p4"/></svg></button><button aria-label="Arc 2 points"><svg><use href="#p5"/></svg></button><button aria-label="Arc 3 points"><svg><use href="#p6"/></svg></button><button aria-label="Circle"><svg><use href="#p4"/></svg></button><button aria-label="Slot"><svg><use href="#p8"/></svg></button><button aria-label="Fillet"><svg><use href="#p9"/></svg></button><button aria-label="Trim"><svg><use href="#p10"/></svg></button><button aria-label="Break"><svg><use href="#p11"/></svg></button><button class="apart" aria-label="Point array"><svg><use href="#p12"/></svg></button><button aria-label="Cross"><svg><use href="#p13"/></svg></button><button aria-label="Rectangle"><svg><use href="#p14"/></svg></button><button aria-label="Polygon"><svg><use href="#p15"/></svg></button>
      </div>
    </aside>
  </main>

  <footer class="status">
    <div class="status-row"><span class="message">Choose Next Task</span>
      <span class="cell w-solid">SOLIDWIRE</span><span class="cell off w-sub">SUB-ELEMENTS</span><span class="cell w-snap">SNAP</span><span class="cell off w-int">INT</span><span class="cell w-grid">GRID</span><span class="cell off w-hi">HI</span><span class="swatch"></span><span class="line-style"></span>
    </div>
    <div class="status-row"><span class="message">For Help, press F1</span>
      <span class="cell w-axis">X 2.0000</span><span class="cell w-axis">Y 0.7000</span><span class="cell w-axis">Z 0.0000</span><span class="cell w-unit">Inch</span>
    </div>
  </footer>
</div>
</body>
</html>
```
FILE: styles.css
```css
* { box-sizing: border-box; }
body { margin: 0; background: #fff; color: #333; font-family: "Open Sans", "Noto Sans", sans-serif; font-size: 13px; }
button { margin: 0; padding: 0; border: 0; background: none; color: inherit; font: inherit; }
.sprite { position: absolute; width: 0; height: 0; }
.app { display: flex; flex-direction: column; height: 100vh; margin: 0 45px; border-right: 1px solid #eee; overflow: hidden; }

.titlebar { display: flex; align-items: center; flex: none; height: 27px; border-bottom: 1px solid #b8b8b8; }
.brand { position: relative; width: 20px; height: 18px; margin: 0 2px 0 2px; }
.brand-mark { width: 16px; height: 16px; }
.brand-badge { position: absolute; right: 1px; bottom: 0; width: 8px; height: 8px; background: #d3263e; color: #fff; font-size: 7px; line-height: 8px; text-align: center; }
h1 { margin: 0; font-size: 13px; font-weight: 400; line-height: 18px; }
.window-buttons { display: flex; gap: 8px; margin-left: auto; padding-right: 5px; }
.window-buttons button { display: grid; place-items: center; width: 45px; height: 24px; }
.window-buttons svg { width: 12px; height: 12px; fill: none; stroke: #555; }

.menubar { display: flex; align-items: center; flex: none; height: 31px; background: #f3f3f3; border-bottom: 1px solid #aaa; }
.menubar > button { margin-right: 9px; padding-top: 1px; line-height: 20px; }
.menubar u { text-underline-offset: 2px; }
.doc-mark { width: 13px; height: 15px; margin: 0 4px 0 0; }
.grip { flex: none; align-self: stretch; width: 4px; margin: 2px 3px; border: solid #b5b5b5; border-width: 0 1px; }
.doc-buttons { display: flex; gap: 3px; margin-left: auto; padding-right: 1px; }
.doc-buttons button { display: grid; place-items: center; width: 38px; height: 22px; border: 1px solid #fff; border-right: 2px solid #888; border-bottom-color: #888; background: #f2f2f2; }
.doc-buttons svg { width: 14px; height: 14px; stroke: #111; }

.bars { flex: none; }
.bar-row { display: flex; height: 28px; }
.row-create { padding-left: 138px; }
.row-view { padding-left: 452px; height: 27px; }
.row-select { padding-left: 520px; }
.toolbar { display: flex; align-items: center; background: #f3f2f3; border: solid #b9b9b9; border-width: 0 1px 1px 0; padding-right: 6px; }
.toolbar button { display: grid; place-items: center; flex: 1 1 20px; height: 22px; }
.toolbar button svg { width: 16px; height: 16px; }
.toolbar i { flex: none; width: 1px; height: 20px; margin: 0 3px; background: #bbb; }
.toolbar .on { border: solid #999; border-width: 1px 0 0 1px; background: #fbfbfb; }
.machining { width: 227px; }
.machining .grip { margin: 2px 0 2px 1px; }
.features { width: 371px; }
.edit { width: 403px; }
.standard { width: 134px; }
.view { width: 251px; }
.select { width: 184px; padding-right: 7px; }
.planes { width: 316px; padding-right: 8px; }
.planes .grip { margin: 2px 1px 2px 2px; }
.combo { position: relative; flex: none; width: 70px; height: 23px; border: solid #777; border-width: 2px 1px 1px 2px; background: #fff; }
.combo select { width: 48px; height: 20px; padding: 0 0 0 2px; border: 0; outline: 0; appearance: none; background: #fff; color: #333; font: inherit; line-height: 20px; text-overflow: clip; }
.combo::after { content: ""; position: absolute; right: 5px; top: 8px; border: solid transparent; border-width: 5px 5px 0; border-top-color: #111; }
.combo::before { content: ""; position: absolute; right: 0; top: 0; width: 18px; height: 20px; background: #f1f1f1; border-right: 1px solid #888; border-bottom: 1px solid #888; }

.workspace { display: flex; flex: 1; min-height: 0; border-top: 1px solid #999; }
.project { display: flex; flex-direction: column; flex: none; width: 240px; padding: 3px 12px 3px 3px; background: #f3f3f3; border-right: 1px solid #888; }
.project-head { display: flex; align-items: center; gap: 3px; height: 10px; margin-bottom: 3px; }
.rule { height: 5px; border: solid #bbb; border-width: 1px 0; }
.project-head .rule { flex: 1; }
.project-head button { display: grid; place-items: center; width: 9px; height: 9px; border: solid #888; border-width: 0 1px 1px 0; }
.project-head svg { width: 7px; height: 7px; stroke: #111; stroke-width: 2; }
.tree { flex: 1; margin-left: 3px; border: 2px solid #555; background: #fff; }
.tree-root, .tree-child { display: flex; align-items: center; height: 19px; }
.tree svg { width: 16px; height: 16px; margin-right: 2px; }
.tree-child svg { width: 14px; height: 14px; }
.branch { width: 12px; height: 11px; margin: 0 1px 9px 7px; border: solid #ccc; border-width: 0 0 1px 1px; }
.picked { padding: 0 1px; border: 1px solid #e55; line-height: 18px; }
.tabs { display: flex; gap: 1px; padding-left: 12px; height: 19px; }
.tabs button { display: grid; place-items: center; width: 22px; border: solid #444; border-width: 0 1px 2px 0; border-radius: 0 0 3px 3px; background: #fafafa; }
.tabs svg { width: 15px; height: 15px; }

.canvas { position: relative; flex: 1; min-width: 0; background: #5bc0f1; overflow: hidden; }
.scene { display: block; width: 100%; height: 100%; }
.dialog { position: absolute; left: 645px; top: 101px; width: 253px; background: #f2f2f2; box-shadow: 0 1px 6px rgba(20, 60, 90, .7); font-family: "Liberation Sans", Arial, sans-serif; font-size: 12px; }
.dialog h2 { margin: 0; padding: 0 9px; background: #fff; color: #999; font-size: 13px; font-weight: 400; line-height: 34px; font-family: "Open Sans", "Noto Sans", sans-serif; }
.dialog-body { position: relative; padding: 7px 9px 0 10px; }
.choices { display: grid; grid-template-columns: 81px 1fr; grid-auto-rows: 18px; padding-bottom: 5px; border-bottom: 1px solid #aaa; color: #555; }
.choices label { display: flex; align-items: center; white-space: nowrap; }
.choices input { appearance: none; width: 12px; height: 12px; margin: 0 6px 0 0; border: 1px solid; border-color: #777 #f5f5f5 #f5f5f5 #777; border-radius: 50%; background: #fff; flex: none; }
.choices input:checked { background: radial-gradient(circle, #111 3px, #fff 4px); }
.apply { position: absolute; right: 6px; top: 32px; width: 87px; height: 27px; border: 1px solid #fff; border-right: 2px solid #888; border-bottom: 2px solid #888; background: #f2f2f2; color: #aaa; font-size: 13px; }
.coords { display: flex; align-items: center; gap: 5px; height: 36px; color: #aaa; }
.coords span { width: 41px; }
.coords input { width: 56px; height: 20px; padding: 0 1px; border: solid #777; border-width: 2px 0 0 2px; background: #f0f0f0; color: #888; font: inherit; }

.rail { flex: none; width: 28px; padding: 13px 0 0 2px; }
.geometry { display: flex; flex-direction: column; align-items: center; height: 331px; padding-bottom: 5px; background: #f3f2f3; border: solid #bbb; border-width: 0 1px 1px 0; }
.geometry .rule { flex: none; width: 24px; margin: 2px 0 3px; }
.geometry button { display: grid; place-items: center; flex: 1; width: 24px; }
.geometry .apart { margin-top: 5px; }
.geometry svg { width: 15px; height: 15px; }

.status { flex: none; padding-top: 3px; border-top: 1px solid #ccc; background: #f3f3f3; }
.status-row { display: flex; height: 19px; line-height: 20px; white-space: nowrap; }
.message { flex: 1; }
.cell { flex: none; height: 17px; margin-right: 3px; padding-left: 2px; border: solid #bbb; border-width: 1px 0 0 1px; line-height: 18px; }
.off { color: #aaa; }
.w-solid { width: 73px; }
.w-sub { width: 98px; }
.w-snap { width: 38px; }
.w-int { width: 25px; }
.w-grid { width: 34px; }
.w-hi { width: 18px; }
.w-axis { width: 81px; }
.w-unit { width: 41px; margin-right: 0; }
.swatch { width: 12px; height: 17px; margin-right: 2px; background: #000; }
.line-style { width: 81px; height: 17px; background: linear-gradient(#111, #111) center / 77px 2px no-repeat #5bc0f1; }
```
